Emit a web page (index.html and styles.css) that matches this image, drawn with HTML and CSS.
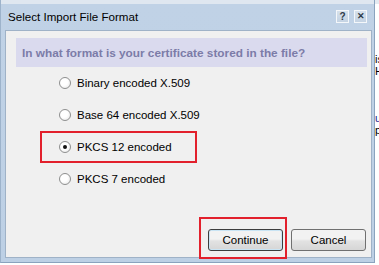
FILE: index.html
```html
<!DOCTYPE html>
<html>
<head>
<meta charset="utf-8">
<link rel="stylesheet" href="styles.css">
</head>
<body>
<div class="page">
  <div class="dialog">
    <div class="titlebar">
      <span class="title">Select Import File Format</span>
      <div class="tbtns">
        <span class="tbtn help">?</span>
        <span class="tbtn close">✕</span>
      </div>
    </div>
    <div class="content">
      <div class="header">In what format is your certificate stored in the file?</div>
      <div class="options">
        <div class="opt"><span class="radio"></span><span>Binary encoded X.509</span></div>
        <div class="opt"><span class="radio"></span><span>Base 64 encoded X.509</span></div>
        <div class="opt marked"><span class="radio checked"></span><span>PKCS 12 encoded</span></div>
        <div class="opt"><span class="radio"></span><span>PKCS 7 encoded</span></div>
      </div>
      <div class="footer">
        <div class="mark"><button class="btn default">Continue</button></div>
        <button class="btn">Cancel</button>
      </div>
    </div>
  </div>
  <div class="behind">
    <span class="b1">is</span>
    <span class="b2">H</span>
    <span class="b3">u</span>
    <span class="b4">p</span>
  </div>
</div>
</body>
</html>
```
FILE: styles.css
```css
html, body {
  margin: 0;
  padding: 0;
  background: #ffffff;
}
body {
  font-family: "Liberation Sans", Arial, sans-serif;
  width: 379px;
  height: 265px;
  overflow: hidden;
}
.page {
  display: flex;
  width: 379px;
  height: 265px;
  background: linear-gradient(#e4eaf1 0 4px, #ffffff 4px);
}
.dialog {
  flex: 0 0 375px;
  height: 263px;
  box-sizing: border-box;
  display: flex;
  flex-direction: column;
  padding: 0 2px 4px 4px;
  background: linear-gradient(#dfe7f0 0 4px, #c0d2e6 4px, #bdd0e5 100%);
  border-left: 1px solid #9db3cb;
  border-right: 1px solid #8aa3be;
  border-bottom: 1px solid #8aa3be;
}
.titlebar {
  height: 30px;
  flex: 0 0 30px;
  display: flex;
  align-items: center;
  padding-top: 3px;
  box-sizing: border-box;
}
.title {
  font-size: 11.6px;
  color: #000;
  margin-left: 3px;
  white-space: nowrap;
}
.tbtns {
  margin-left: auto;
  display: flex;
  gap: 5px;
  margin-right: 5px;
}
.tbtn {
  width: 13px;
  height: 13px;
  box-sizing: border-box;
  border: 1px solid #f4f7fa;
  background: linear-gradient(#d6e1ec, #c4d3e3);
  display: flex;
  align-items: center;
  justify-content: center;
  font-size: 10px;
  font-weight: bold;
  color: #2e3a48;
  line-height: 1;
}
.tbtn.close {
  font-size: 9px;
}
.content {
  flex: 1;
  display: flex;
  flex-direction: column;
  background: #f0f0f0;
  border: 1px solid #9fb2c7;
}
.header {
  margin: 7px 4px 0 10px;
  height: 29px;
  background: #dadaee;
  display: flex;
  align-items: center;
  padding-left: 6px;
  font-size: 11.8px;
  font-weight: bold;
  color: #7c7ca8;
  white-space: nowrap;
}
.options {
  display: flex;
  flex-direction: column;
  margin-left: 34px;
}
.opt {
  width: 157px;
  height: 32px;
  box-sizing: border-box;
  border: 2px solid transparent;
  display: flex;
  align-items: center;
  padding-left: 17px;
  gap: 6px;
  font-size: 11.5px;
  color: #000;
  white-space: nowrap;
}
.opt.marked {
  border-color: #e2202c;
}
.radio {
  width: 12px;
  height: 12px;
  flex: 0 0 12px;
  box-sizing: border-box;
  border-radius: 50%;
  border: 1px solid #8e8f8f;
  background: radial-gradient(circle at 40% 40%, #ffffff 0 40%, #e2e2e2 100%);
  display: flex;
  align-items: center;
  justify-content: center;
}
.radio.checked::after {
  content: "";
  width: 4px;
  height: 4px;
  border-radius: 50%;
  background: #111;
}
.footer {
  margin-top: auto;
  display: flex;
  justify-content: flex-end;
  align-items: flex-end;
  padding: 0 5px 6px 0;
}
.mark {
  border: 2px solid #e2202c;
  padding: 10px 2px 6px 7px;
  margin-bottom: -8px;
  margin-right: 4px;
  display: flex;
}
.btn {
  width: 75px;
  height: 22px;
  box-sizing: border-box;
  border: 1px solid #707070;
  border-radius: 3px;
  background: linear-gradient(#f2f2f2 0 45%, #e2e2e2 55%, #d6d6d6 100%);
  font-family: "Liberation Sans", Arial, sans-serif;
  font-size: 11.5px;
  color: #000;
  padding: 0;
  margin: 0;
}
.btn.default {
  border-color: #3d3d3d;
  box-shadow: inset 0 0 0 1px #c9e4f4;
}
.behind {
  flex: 1;
  display: flex;
  flex-direction: column;
  font-size: 11px;
  line-height: 12px;
  color: #000;
  padding-top: 53px;
  overflow: hidden;
}
.behind span {
  display: block;
}
.b3 {
  margin-top: 35px;
  color: #1a1a8a;
}
```
